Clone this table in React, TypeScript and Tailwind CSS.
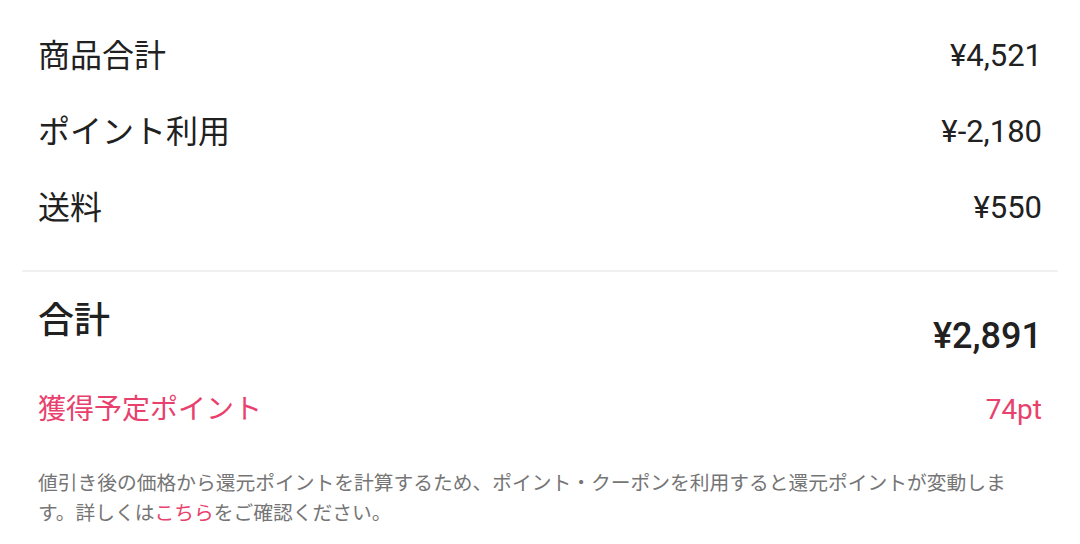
import React from "react";

const rows = [
  { label: "商品合計", value: "¥4,521" },
  { label: "ポイント利用", value: "¥-2,180" },
  { label: "送料", value: "¥550" },
];

export default function App() {
  return (
    <div className="h-[544px] w-[1080px] bg-white font-['Roboto','Noto_Sans_CJK_JP',sans-serif] text-[#212121]">
      <div className="px-[22px] pt-[18px]">
        <div className="px-4">
          {rows.map((row) => (
            <div
              key={row.label}
              className="flex h-[76px] items-center justify-between"
            >
              <span className="text-[32px]">{row.label}</span>
              <span className="text-[31px]">{row.value}</span>
            </div>
          ))}
        </div>

        <div className="mt-6 h-[2px] bg-[#f0f0f0]" />

        <div className="px-4">
          <div className="flex items-start justify-between pt-[31px]">
            <span className="text-[36px] leading-9 font-medium">合計</span>
            <span className="mt-[15px] text-[36px] leading-9 font-medium">
              ¥2,891
            </span>
          </div>

          <div className="mt-[42px] flex items-center justify-between text-[28px] leading-7 text-[#e8416d]">
            <span>獲得予定ポイント</span>
            <span>74pt</span>
          </div>

          <p className="mt-[45px] pr-4 text-[19.75px] leading-[30px] text-[#757575]">
            値引き後の価格から還元ポイントを計算するため、ポイント・クーポンを利用すると還元ポイントが変動します。詳しくは
            <span className="text-[#e8416d]">こちら</span>
            をご確認ください。
          </p>
        </div>
      </div>
    </div>
  );
}
